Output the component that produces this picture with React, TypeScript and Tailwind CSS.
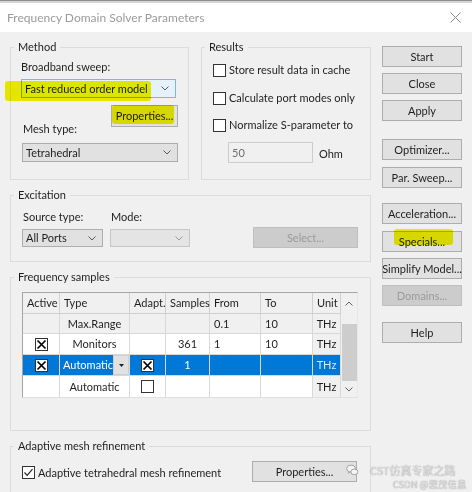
import type { ReactNode } from 'react';

// Small chevron used by the combo boxes and the scrollbar
function Chevron({ up = false, color = '#5a5a5a' }: { up?: boolean; color?: string }) {
  return (
    <svg width="8" height="5" viewBox="0 0 8 5" className="shrink-0">
      <path d={up ? 'M0.5 4.5 L4 1 L7.5 4.5' : 'M0.5 0.5 L4 4 L7.5 0.5'} fill="none" stroke={color} strokeWidth="1" />
    </svg>
  );
}

function Btn({ children, className = '', disabled = false }: { children: ReactNode; className?: string; disabled?: boolean }) {
  return (
    <div
      className={`flex items-center justify-center whitespace-nowrap border ${
        disabled ? 'bg-[#cccccc] border-[#bfbfbf] text-[#9a9a9a]' : 'bg-[#e1e1e1] border-[#adadad]'
      } ${className}`}
    >
      {children}
    </div>
  );
}

function Combo({ value = '', className = '', focused = false, disabled = false }: { value?: string; className?: string; focused?: boolean; disabled?: boolean }) {
  const look = focused
    ? 'bg-[#e5f1fb] border-[#7eb4ea]'
    : disabled
    ? 'bg-[#e4e4e4] border-[#c6c6c6]'
    : 'bg-[#e1e1e1] border-[#adadad]';
  return (
    <div className={`flex items-center justify-between border pl-[3px] pr-[6px] ${look} ${className}`}>
      <span>{value}</span>
      <Chevron color={disabled ? '#9a9a9a' : '#5a5a5a'} />
    </div>
  );
}

function CheckBox({ mark = 'none' }: { mark?: 'none' | 'cross' | 'tick' }) {
  return (
    <svg width="13" height="13" viewBox="0 0 13 13" className="shrink-0">
      <rect x="0.5" y="0.5" width="12" height="12" fill="#fff" stroke="#333" />
      {mark === 'cross' && <path d="M2.5 2.5 L10.5 10.5 M10.5 2.5 L2.5 10.5" stroke="#000" strokeWidth="1.7" />}
      {mark === 'tick' && <path d="M2.5 6.5 L5.2 9.3 L10.5 3.2" fill="none" stroke="#222" strokeWidth="1.2" />}
    </svg>
  );
}

function Group({ title, children, className = '' }: { title: string; children: ReactNode; className?: string }) {
  return (
    <fieldset className={`border border-[#dcdcdc] ${className}`}>
      <legend className="ml-[3px] px-[4px] leading-[14px]">{title}</legend>
      {children}
    </fieldset>
  );
}

const colW = ['w-[37px]', 'w-[70px]', 'w-[36px]', 'w-[44px]', 'w-[51px]', 'w-[52px]', 'w-[28px]'];
const headers = ['Active', 'Type', 'Adapt.', 'Samples', 'From', 'To', 'Unit'];

type Cell = { text?: string; align?: 'c' | 'l'; box?: 'cross' | 'none' };

const rows: { h: string; bg: string; cells: Cell[] }[] = [
  {
    h: 'h-[20px]',
    bg: 'bg-[#f0f0f0]',
    cells: [{}, { text: 'Max.Range', align: 'c' }, {}, {}, { text: '0.1' }, { text: '10' }, { text: 'THz', align: 'c' }],
  },
  {
    h: 'h-[21px]',
    bg: 'bg-white',
    cells: [{ box: 'cross' }, { text: 'Monitors', align: 'c' }, {}, { text: '361', align: 'c' }, { text: '1' }, { text: '10' }, { text: 'THz', align: 'c' }],
  },
  {
    h: 'h-[21px]',
    bg: 'bg-white',
    cells: [{}, { text: 'Automatic', align: 'c' }, { box: 'none' }, {}, {}, {}, { text: 'THz', align: 'c' }],
  },
];

function SamplesTable() {
  return (
    <div className="flex w-[336px] border-l border-t border-[#a5a5a5] border-b border-b-[#e0e0e0] border-r border-r-[#e8e8e8]">
      <div className="flex flex-col">
        <div className="flex h-[21px] bg-[#f0f0f0] border-b border-[#d0d0d0]">
          {headers.map((h, i) => (
            <div key={h} className={`${colW[i]} border-r border-[#d0d0d0] pl-[4px] flex items-center`}>
              {h}
            </div>
          ))}
        </div>
        {rows.slice(0, 2).map((r, ri) => (
          <TableRow key={ri} {...r} />
        ))}
        {/* selected row with in-place editor on the Type cell */}
        <div className="flex h-[21px] bg-[#0078d7] text-white border-b border-[#d8d8d8]">
          <div className={`${colW[0]} border-r border-[#d8d8d8] flex items-center justify-center`}>
            <CheckBox mark="cross" />
          </div>
          <div className={`${colW[1]} border-r border-[#d8d8d8] flex`}>
            <div className="flex-1 flex items-center pl-[3px]">Automatic</div>
            <div className="w-[17px] bg-[#e1e1e1] border border-[#cfcfcf] flex items-center justify-center">
              <svg width="5" height="3" viewBox="0 0 5 3">
                <path d="M0 0 H5 L2.5 3 Z" fill="#222" />
              </svg>
            </div>
          </div>
          <div className={`${colW[2]} border-r border-[#d8d8d8] flex items-center justify-center`}>
            <CheckBox mark="cross" />
          </div>
          <div className={`${colW[3]} border-r border-[#d8d8d8] flex items-center justify-center`}>1</div>
          <div className={`${colW[4]} border-r border-[#d8d8d8]`} />
          <div className={`${colW[5]} border-r border-[#d8d8d8]`} />
          <div className={`${colW[6]} border-r border-[#d8d8d8] flex items-center justify-center text-[#dce9f6]`}>THz</div>
        </div>
        <TableRow {...rows[2]} last />
      </div>
      {/* vertical scrollbar */}
      <div className="w-[18px] bg-[#f0f0f0] flex flex-col items-center">
        <div className="h-[21px] flex items-center justify-center">
          <Chevron up color="#606060" />
        </div>
        <div className="mt-[10px] w-[15px] h-[57px] bg-[#cdcdcd]" />
        <div className="flex-1 flex items-center justify-center">
          <Chevron color="#606060" />
        </div>
      </div>
    </div>
  );
}

function TableRow({ h, bg, cells, last = false }: { h: string; bg: string; cells: Cell[]; last?: boolean }) {
  return (
    <div className={`flex ${h} ${bg} ${last ? '' : 'border-b border-[#d8d8d8]'}`}>
      {cells.map((c, i) => (
        <div
          key={i}
          className={`${colW[i]} border-r border-[#d8d8d8] flex items-center ${
            c.align === 'c' || c.box ? 'justify-center' : 'pl-[4px]'
          } ${i === 6 ? 'bg-[#f0f0f0]' : ''}`}
        >
          {c.box ? <CheckBox mark={c.box} /> : c.text}
        </div>
      ))}
    </div>
  );
}

export default function App() {
  return (
    <div className="relative w-[472px] h-[492px] overflow-hidden bg-[#f0f0f0] font-['Lato','Noto_Sans',sans-serif] text-[11px] leading-[14px] text-[#1e1e1e]">
      {/* edge of the window behind */}
      <div className="h-[3px] bg-[#d6d6d6] border-t border-[#8c8c8c]" />

      {/* title bar */}
      <div className="h-[29px] bg-white flex items-center justify-between pl-[7px] pr-[11px]">
        <span className="text-[12px] text-[#9b9b9b]">Frequency Domain Solver Parameters</span>
        <svg width="11" height="11" viewBox="0 0 11 11">
          <path d="M0.5 0.5 L10.5 10.5 M10.5 0.5 L0.5 10.5" stroke="#8a8a8a" strokeWidth="1" />
        </svg>
      </div>

      <div className="flex pl-[10px] pt-[8px] gap-[11px]">
        {/* left column: option groups */}
        <div className="w-[361px] flex flex-col">
          <div className="flex gap-[12px]">
            <Group title="Method" className="w-[179px]">
              <div className="h-[124px] pl-[10px] pt-[6px] flex flex-col items-start">
                <div>Broadband sweep:</div>
                <Combo focused value="Fast reduced order model" className="mt-[5px] w-[155px] h-[19px]" />
                <Btn className="mt-[7px] ml-[90px] w-[67px] h-[22px]">Properties...</Btn>
                <div className="-mt-[5px] ml-[2px]">Mesh type:</div>
                <Combo value="Tetrahedral" className="mt-[7px] ml-[1px] w-[156px] h-[19px]" />
              </div>
            </Group>
            <Group title="Results" className="w-[170px]">
              <div className="h-[125px] pl-[11px] pt-[9px] flex flex-col items-start">
                <div className="flex items-center gap-[3px] h-[14px]">
                  <CheckBox />
                  <span>Store result data in cache</span>
                </div>
                <div className="mt-[14px] flex items-center gap-[3px] h-[14px]">
                  <CheckBox />
                  <span>Calculate port modes only</span>
                </div>
                <div className="mt-[13px] flex items-center gap-[3px] h-[14px]">
                  <CheckBox />
                  <span>Normalize S-parameter to</span>
                </div>
                <div className="mt-[10px] ml-[15px] flex items-center gap-[6px]">
                  <div className="w-[85px] h-[21px] border border-[#cccccc] bg-[#f0f0f0] text-[#6d6d6d] flex items-center pl-[3px]">
                    50
                  </div>
                  <span className="mt-[3px]">Ohm</span>
                </div>
              </div>
            </Group>
          </div>

          <Group title="Excitation" className="mt-[8px]">
            <div className="h-[59px] pl-[11px] pr-[12px] pt-[8px] flex items-start">
              <div className="flex flex-col">
                <div className="ml-[1px]">Source type:</div>
                <Combo value="All Ports" className="mt-[5px] w-[81px] h-[18px]" />
              </div>
              <div className="ml-[7px] flex flex-col">
                <div className="ml-[1px]">Mode:</div>
                <Combo disabled className="mt-[5px] w-[80px] h-[18px]" />
              </div>
              <Btn disabled className="ml-auto mt-[17px] w-[105px] h-[21px]">Select...</Btn>
            </div>
          </Group>

          <Group title="Frequency samples" className="mt-[8px]">
            <div className="h-[146px] pl-[11px] pt-[8px]">
              <SamplesTable />
            </div>
          </Group>

          <Group title="Adaptive mesh refinement" className="mt-[8px]">
            <div className="h-[60px] pl-[11px] pr-[13px] pt-[8px] flex items-start">
              <div className="flex items-center gap-[3px] h-[21px] mt-[1px]">
                <CheckBox mark="tick" />
                <span>Adaptive tetrahedral mesh refinement</span>
              </div>
              <Btn className="ml-auto w-[105px] h-[21px]">Properties...</Btn>
            </div>
          </Group>
        </div>

        {/* right column: command buttons */}
        <div className="w-[80px] pt-[6px] flex flex-col">
          <Btn className="h-[21px]">Start</Btn>
          <Btn className="mt-[6px] h-[21px]">Close</Btn>
          <Btn className="mt-[6px] h-[21px]">Apply</Btn>
          <Btn className="mt-[18px] h-[21px]">Optimizer...</Btn>
          <Btn className="mt-[7px] h-[21px]">Par. Sweep...</Btn>
          <Btn className="mt-[15px] h-[21px]">Acceleration...</Btn>
          <Btn className="mt-[7px] h-[21px]">Specials...</Btn>
          <Btn className="mt-[6px] h-[21px]">Simplify Model...</Btn>
          <Btn disabled className="mt-[6px] h-[21px]">Domains...</Btn>
          <Btn className="mt-[16px] h-[21px]">Help</Btn>
        </div>
      </div>

      {/* highlighter marks */}
      <div className="absolute left-[5px] top-[81px] w-[146px] h-[20px] rounded-[3px] bg-[#f4f400] mix-blend-multiply" />
      <div className="absolute left-[112px] top-[105px] w-[62px] h-[19px] rounded-[3px] bg-[#f4f400] mix-blend-multiply" />
      <div className="absolute left-[394px] top-[229px] w-[59px] h-[16px] rounded-[3px] bg-[#f4f400] mix-blend-multiply" />

      {/* watermark */}
      <div className="absolute left-[346px] top-[463px] flex flex-col items-end text-[#e4e4e4] [text-shadow:0_0_1px_#6f6f6f] font-['Noto_Sans_CJK_SC',sans-serif]">
        <div className="flex items-center gap-[11px] h-[14px]">
          <svg width="13" height="16" viewBox="0 0 13 17">
            <ellipse cx="5" cy="7" rx="4.5" ry="3.6" fill="#f4f4f4" stroke="#8a8a8a" strokeWidth="0.8" />
            <ellipse cx="8.5" cy="10.5" rx="3.8" ry="3" fill="#f4f4f4" stroke="#8a8a8a" strokeWidth="0.8" />
            <path d="M2.5 10 L2 12 L4 10.6" fill="#f4f4f4" stroke="#8a8a8a" strokeWidth="0.6" />
          </svg>
          <span className="text-[11px] leading-[13px]">CST仿真专家之路</span>
        </div>
        <span className="mt-[2px] text-[9.5px] leading-[10px] mr-[-11px]">CSDN @思茂信息</span>
      </div>
    </div>
  );
}
